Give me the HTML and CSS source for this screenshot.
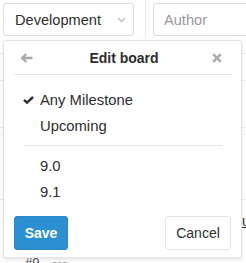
FILE: index.html
```html
<!DOCTYPE html>
<html lang="en">
<head>
  <meta charset="UTF-8">
  <title>Edit board</title>
  <link rel="stylesheet" href="styles.css">
</head>
<body>
  <div class="topbar">
    <div class="filter-dropdown">
      <span>Development</span>
      <svg class="chevron" width="9" height="6" viewBox="0 0 9 6"><path d="M1 1 L4.5 4.5 L8 1" fill="none" stroke="#c4c4c4" stroke-width="1.6"/></svg>
    </div>
    <div class="divider"></div>
    <div class="filter-input">Author</div>
  </div>

  <div class="board">
    <div class="board-header"></div>
    <div class="card card-a"></div>
    <div class="card card-b"></div>
    <div class="card card-c">
      <span class="card-link">u</span>
      <div class="card-ref">#9 <span class="dots">‹ooo›</span></div>
    </div>
  </div>

  <div class="panel">
    <div class="panel-header">
      <svg width="12" height="10" viewBox="0 0 12 10"><path d="M5.2 1 L1.2 5 L5.2 9" fill="none" stroke="#acacac" stroke-width="2.4" stroke-linejoin="miter"/><path d="M1.5 5 H11.5" stroke="#acacac" stroke-width="2.6"/></svg>
      <span class="panel-title">Edit board</span>
      <svg width="10" height="10" viewBox="0 0 10 10"><path d="M1.2 1.2 L8.8 8.8 M8.8 1.2 L1.2 8.8" stroke="#acacac" stroke-width="2.6"/></svg>
    </div>
    <ul class="milestones">
      <li class="is-active">
        <span class="check"><svg width="11" height="8" viewBox="0 0 11 8"><path d="M1 3.8 L4 6.6 L10 1" fill="none" stroke="#2e2e2e" stroke-width="2.4"/></svg></span>
        Any Milestone
      </li>
      <li><span class="check"></span>Upcoming</li>
      <li class="sep"></li>
      <li><span class="check"></span>9.0</li>
      <li><span class="check"></span>9.1</li>
    </ul>
    <div class="panel-footer">
      <button class="btn btn-save">Save</button>
      <button class="btn btn-cancel">Cancel</button>
    </div>
  </div>
</body>
</html>
```

FILE: styles.css
```css
body {
  margin: 0;
  background: #fff;
  font-family: 'Liberation Sans', Arial, sans-serif;
  color: #2e2e2e;
  width: 246px;
  height: 263px;
  overflow: hidden;
  position: relative;
}

.topbar {
  display: flex;
  height: 37px;
  padding-left: 3px;
}

.topbar > * {
  flex-shrink: 0;
}

.filter-dropdown {
  margin-top: 3px;
  border: 1px solid #dcdcdc;
  border-radius: 3px;
  display: flex;
  align-items: center;
  padding-left: 11px;
  box-sizing: border-box;
  width: 131px;
  height: 33px;
  font-size: 14.6px;
}

.chevron {
  margin-left: 16px;
}

.divider {
  width: 1px;
  height: 37px;
  background: #ececec;
  margin-left: 11px;
}

.filter-input {
  margin: 3px 0 0 7px;
  height: 33px;
  width: 120px;
  box-sizing: border-box;
  border: 1px solid #dcdcdc;
  border-radius: 3px;
  padding-left: 10px;
  display: flex;
  align-items: center;
  color: #999;
  font-size: 14.6px;
}

.board {
  margin: 16px 0 0 0;
}

.board-header {
  height: 26px;
  border-top: 1px solid #ececec;
  border-bottom: 1px solid #ececec;
}

.card {
  border-bottom: 1px solid #ececec;
}

.card-a {
  height: 46px;
}

.card-b {
  height: 64px;
  margin-top: 6px;
  border-top: 1px solid #f2f2f2;
}

.card-c {
  height: 70px;
  position: relative;
}

.card-link {
  position: absolute;
  left: 242px;
  top: 13px;
  font-size: 14px;
  color: #2e2e2e;
  text-decoration: underline;
}

.card-ref {
  position: absolute;
  left: 25px;
  top: 55px;
  font-size: 13px;
  color: #555;
}

.dots {
  font-size: 9px;
  color: #888;
  margin-left: 6px;
}

.panel {
  position: absolute;
  left: 3px;
  top: 40px;
  width: 239px;
  height: 218px;
  box-sizing: border-box;
  background: #fff;
  border: 1px solid #e5e5e5;
  border-radius: 3px;
  box-shadow: 0 2px 4px rgba(0,0,0,0.1);
  padding: 0 9px 6px 10px;
}

.panel-header {
  height: 33px;
  border-bottom: 1px solid #e5e5e5;
  display: flex;
  align-items: center;
  justify-content: space-between;
  padding: 0 10px 0 7px;
}

.panel-title {
  font-weight: bold;
  font-size: 14px;
  margin-left: 3px;
}

.milestones {
  list-style: none;
  margin: 0;
  padding: 12px 0 0 0;
  font-size: 14.8px;
}

.milestones li {
  height: 26px;
  line-height: 26px;
  display: flex;
  align-items: center;
  padding-left: 9px;
}

.check {
  width: 17px;
  display: flex;
  align-items: center;
}

.milestones .sep {
  height: 1px;
  background: #e5e5e5;
  margin: 6px 10px 7px 10px;
  padding: 0;
}

.panel-footer {
  display: flex;
  justify-content: space-between;
  margin-top: 11px;
  padding-right: 1px;
}

.btn {
  height: 34px;
  border-radius: 3px;
  font-family: 'Liberation Sans', Arial, sans-serif;
  font-size: 14px;
  padding: 0;
  cursor: pointer;
}

.btn-save {
  width: 54px;
  background: #2b8fd4;
  border: 1px solid #2a87c8;
  color: #fff;
  font-weight: bold;
}

.btn-cancel {
  width: 66px;
  background: #fff;
  border: 1px solid #e5e5e5;
  color: #2e2e2e;
}
```
